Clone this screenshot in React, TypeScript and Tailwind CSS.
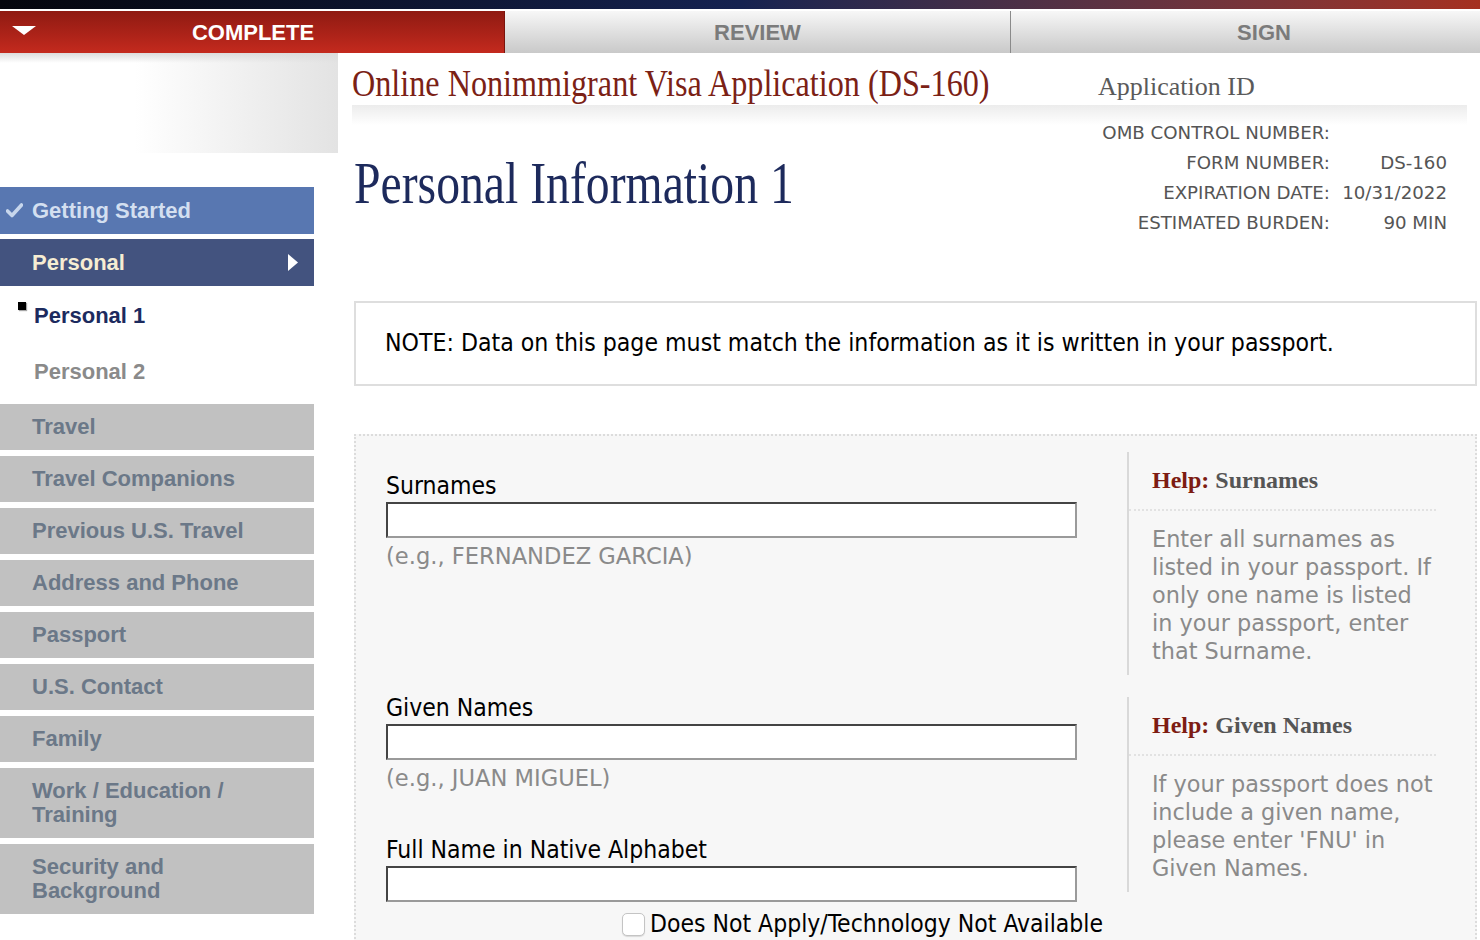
import React from 'react';

const grayNav = [
  ['Travel'],
  ['Travel Companions'],
  ['Previous U.S. Travel'],
  ['Address and Phone'],
  ['Passport'],
  ['U.S. Contact'],
  ['Family'],
  ['Work / Education /', 'Training'],
  ['Security and', 'Background'],
];

const verdana = "font-['DejaVu_Sans',Verdana,sans-serif]";
const tahoma = "font-['DejaVu_Sans_Condensed','DejaVu_Sans',Tahoma,sans-serif] font-stretch-condensed";
const arial = "font-['Liberation_Sans',Arial,sans-serif]";
const times = "font-['Liberation_Serif','Times_New_Roman',serif]";

function TextInput() {
  return (
    <div className="h-[36px] w-[691px] bg-white border-2 border-t-[#444] border-l-[#444] border-b-[#9a9a9a] border-r-[#9a9a9a]" />
  );
}

function HelpBox({ topic, lines }: { topic: string; lines: string }) {
  return (
    <div className="border-l-2 border-[#d9d9d9] w-[309px]">
      <div className={`${times} text-[24px] leading-[28px] font-bold pl-[23px] pt-[14px] pb-[15px] border-b-2 border-dotted border-[#e2e2e2]`}>
        <span className="text-[#7d1c12]">Help:</span> <span className="text-[#555]">{topic}</span>
      </div>
      <p className={`${verdana} text-[22.4px] leading-[28px] text-[#8a8a8a] pl-[23px] pt-[14px] pb-[10px] w-[305px]`}>{lines}</p>
    </div>
  );
}

export default function App() {
  return (
    <div className="w-[1480px] h-[940px] overflow-hidden bg-white">
      {/* flag strip */}
      <div className="h-[9px] bg-gradient-to-r from-[#05060d] via-[#152250] via-50% to-[#a5301f]" />
      <div className="h-[2px] bg-white" />

      {/* progress tabs */}
      <div className={`flex h-[42px] ${arial} font-bold text-[22px] overflow-hidden`}>
        <div className="relative w-[505px] shrink-0 flex items-center justify-center bg-gradient-to-b from-[#8f1a12] to-[#c42a1e] text-white border-r border-[#7a140d]">
          <svg className="absolute left-[12px] top-[15px]" width="24" height="10" viewBox="0 0 24 10">
            <polygon points="0,0 24,0 12,9" fill="#fff" />
          </svg>
          <span className="pl-[2px]">COMPLETE</span>
        </div>
        <div className="w-[506px] shrink-0 flex items-center justify-center bg-gradient-to-b from-[#f7f7f7] to-[#c9c9c9] text-[#7b7b7b] border-r border-[#8a8a8a]">
          REVIEW
        </div>
        <div className="w-[506px] shrink-0 flex items-center justify-center bg-gradient-to-b from-[#f7f7f7] to-[#c9c9c9] text-[#7b7b7b]">
          SIGN
        </div>
      </div>

      <div className="flex">
        {/* sidebar */}
        <div className="w-[338px] shrink-0">
          <div className="h-[100px] bg-gradient-to-r from-white from-40% to-[#e3e3e3]">
            <div className="h-[10px] bg-gradient-to-b from-[#dcdcdc] to-transparent" />
          </div>
          <nav className={`${arial} font-bold text-[22px] mt-[34px] w-[314px]`}>
            <div className="h-[47px] bg-[#5877b1] flex items-center text-[#d3dff0]">
              <svg className="ml-[6px] mr-[9px]" width="17" height="15" viewBox="0 0 17 15">
                <path d="M1.5 8 L6 12.5 L15.5 2" fill="none" stroke="#c7d6ec" strokeWidth="3.6" strokeLinecap="round" strokeLinejoin="round" />
              </svg>
              Getting Started
            </div>
            <div className="h-[47px] mt-[5px] bg-[#43537f] flex items-center justify-between pl-[32px] pr-[16px] text-[#f6edd3]">
              <span>Personal</span>
              <svg width="10" height="17" viewBox="0 0 10 17">
                <polygon points="0,0 10,8.5 0,17" fill="#fff" />
              </svg>
            </div>
            <div className="relative h-[56px] mt-[1px] flex items-center pl-[34px] text-[#1c2a5e]">
              <span className="absolute left-[18px] top-[15px] w-[8px] h-[8px] bg-black shadow-[1px_1px_1px_rgba(0,0,0,0.35)]" />
              Personal 1
            </div>
            <div className="h-[56px] flex items-center pl-[34px] text-[#8a8a8a]">Personal 2</div>
            <div className="mt-[5px] flex flex-col gap-[6px]">
              {grayNav.map((lines) => (
                <div
                  key={lines.join(' ')}
                  className={`${lines.length > 1 ? 'h-[70px]' : 'h-[46px]'} bg-[#c1c1c1] flex flex-col justify-center pl-[32px] text-[#6b7888] leading-[24px]`}
                >
                  {lines.map((l) => (
                    <span key={l}>{l}</span>
                  ))}
                </div>
              ))}
            </div>
          </nav>
        </div>

        {/* main */}
        <main className="flex-1 pl-[14px]">
          <div className="flex h-[52px] items-end pb-[3px]">
            <div className={`${times} w-[746px] text-[38px] leading-[38px] text-[#7b2115]`}>
              <span className="inline-block origin-left scale-x-[0.847] whitespace-nowrap">Online Nonimmigrant Visa Application (DS-160)</span>
            </div>
            <div className={`${times} text-[26px] leading-[30px] text-[#5a5a5a]`}>Application ID</div>
          </div>
          <div className="h-[20px] w-[1115px] bg-gradient-to-b from-[#ececec] to-white" />

          <div className="flex justify-between pr-[33px]">
            <h1 className={`${times} mt-[26px] ml-[2px] text-[60px] leading-[64px] text-[#1d2a5c] font-normal`}>
              <span className="inline-block origin-left scale-x-[0.795] whitespace-nowrap">Personal Information 1</span>
            </h1>
            <div className={`${verdana} text-[18.2px] leading-[30px] text-[#555] grid grid-cols-[auto_107px] gap-x-[10px] mt-[-7px]`}>
              <span className="text-right">OMB CONTROL NUMBER:</span>
              <span className="text-right" />
              <span className="text-right">FORM NUMBER:</span>
              <span className="text-right">DS-160</span>
              <span className="text-right">EXPIRATION DATE:</span>
              <span className="text-right">10/31/2022</span>
              <span className="text-right">ESTIMATED BURDEN:</span>
              <span className="text-right">90 MIN</span>
            </div>
          </div>

          <div className="ml-[2px] mt-[63px] w-[1123px] h-[85px] border-2 border-[#dedede] flex items-center pl-[29px]">
            <p className={`${tahoma} text-[24.6px] text-black`}>
              NOTE: Data on this page must match the information as it is written in your passport.
            </p>
          </div>

          <div className="ml-[2px] mt-[48px] w-[1123px] h-[520px] bg-[#f7f7f7] border-2 border-dotted border-[#dcdcdc] flex">
            <div className="pl-[30px] pt-[37px] w-[771px]">
              <div className={`${tahoma} text-[24.5px] leading-[26px] text-black mb-[3px]`}>Surnames</div>
              <TextInput />
              <div className={`${verdana} text-[22.6px] leading-[26px] text-[#8a8a8a] mt-[5px]`}>(e.g., FERNANDEZ GARCIA)</div>

              <div className={`${tahoma} text-[24.5px] leading-[26px] text-black mt-[126px] mb-[3px]`}>Given Names</div>
              <TextInput />
              <div className={`${verdana} text-[22.6px] leading-[26px] text-[#8a8a8a] mt-[5px]`}>(e.g., JUAN MIGUEL)</div>

              <div className={`${tahoma} text-[24.5px] leading-[26px] text-black mt-[46px] mb-[3px]`}>Full Name in Native Alphabet</div>
              <TextInput />
              <label className={`${tahoma} flex items-center gap-[5px] mt-[9px] ml-[236px] text-[24.5px] leading-[26px] text-black whitespace-nowrap`}>
                <span className="w-[23px] h-[23px] rounded-[5px] border border-[#c4c4c4] bg-white shadow-[0_1px_1px_rgba(0,0,0,0.12)]" />
                Does Not Apply/Technology Not Available
              </label>
            </div>

            <div className="pt-[16px] flex flex-col gap-[22px]">
              <HelpBox
                topic="Surnames"
                lines="Enter all surnames as listed in your passport. If only one name is listed in your passport, enter that Surname."
              />
              <HelpBox
                topic="Given Names"
                lines="If your passport does not include a given name, please enter 'FNU' in Given Names."
              />
            </div>
          </div>
        </main>
      </div>
    </div>
  );
}
